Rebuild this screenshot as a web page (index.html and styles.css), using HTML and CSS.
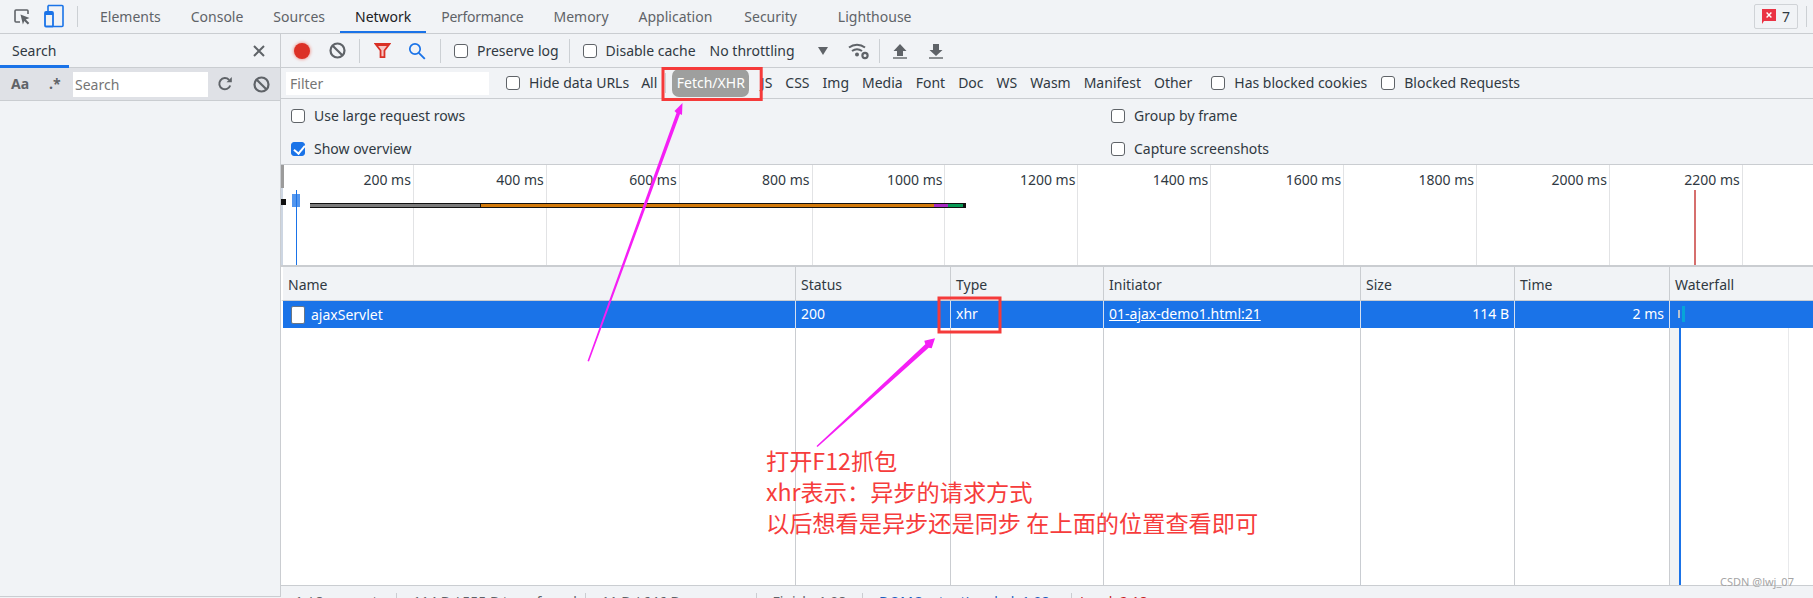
FILE: index.html
```html
<!DOCTYPE html>
<html lang="en">
<head>
<meta charset="utf-8">
<title>Network</title>
<link rel="stylesheet" href="styles.css">
</head>
<body>
<div class="devtools">
  <header class="tabbar">
    <svg class="ico-inspect" width="18" height="18" viewBox="0 0 18 18"><path d="M7 14H3a1 1 0 0 1-1-1V3a1 1 0 0 1 1-1h11a1 1 0 0 1 1 1v3" fill="none" stroke="#5f6368" stroke-width="1.6"/><path d="M7.5 6.5l9 3.4-3.7 1.5 3.5 3.6-1.5 1.5-3.5-3.6-1.4 3.7z" fill="#5f6368"/></svg>
    <svg class="ico-device" width="20" height="24" viewBox="0 0 20 24"><path d="M4 1.5h14a1 1 0 0 1 1 1v19a1 1 0 0 1-1 1H8" fill="none" stroke="#1a73e8" stroke-width="1.6"/><path d="M4 1.5v7" stroke="#1a73e8" stroke-width="1.6"/><rect x="1" y="8" width="8" height="14.5" rx="1" fill="#f1f3f4" stroke="#1a73e8" stroke-width="1.8"/><rect x="1" y="8" width="8" height="3" fill="#1a73e8"/></svg>
    <span class="vsep tall"></span>
    <nav class="tabs">
      <span class="tab">Elements</span>
      <span class="tab">Console</span>
      <span class="tab">Sources</span>
      <span class="tab active">Network</span>
      <span class="tab perf">Performance</span>
      <span class="tab">Memory</span>
      <span class="tab">Application</span>
      <span class="tab sec">Security</span>
      <span class="tab wide">Lighthouse</span>
    </nav>
    <span class="issues">
      <svg width="14" height="15" viewBox="0 0 14 15"><path d="M0 0h14v12H2l-2 3z" fill="#ea3344"/><path d="M4.6 3.6l4.8 4.8M9.4 3.6L4.6 8.4" stroke="#fff" stroke-width="1.4"/></svg>
      <span>7</span>
    </span>
    <span class="vsep end"></span>
  </header>

  <div class="split">
    <aside class="sidebar">
      <div class="side-head">
        <span class="side-tab">Search</span>
        <svg class="ico-close" width="14" height="14" viewBox="0 0 14 14"><path d="M2 2l10 10M12 2L2 12" stroke="#5f6368" stroke-width="2"/></svg>
      </div>
      <div class="side-tools">
        <span class="aa">Aa</span>
        <span class="regex">.*</span>
        <span class="search-box">Search</span>
        <svg class="ico-refresh" width="16" height="16" viewBox="0 0 16 16"><path d="M13.2 9.5A5.6 5.6 0 1 1 12 3.9" fill="none" stroke="#5f6368" stroke-width="2"/><path d="M9.5 6.2h5.3V1z" fill="#5f6368"/></svg>
        <svg class="ico-clear" width="17" height="17" viewBox="0 0 17 17"><circle cx="8.5" cy="8.5" r="7" fill="none" stroke="#5f6368" stroke-width="2.2"/><path d="M3.7 3.7l9.6 9.6" stroke="#5f6368" stroke-width="2.2"/></svg>
      </div>
    </aside>

    <main class="network">
      <div class="toolbar">
        <span class="record"></span>
        <svg class="ico-stop" width="17" height="17" viewBox="0 0 17 17"><circle cx="8.5" cy="8.5" r="7" fill="none" stroke="#5f6368" stroke-width="2.2"/><path d="M3.7 3.7l9.6 9.6" stroke="#5f6368" stroke-width="2.2"/></svg>
        <span class="vsep s1"></span>
        <svg class="ico-funnel" width="17" height="17" viewBox="0 0 19 19"><path d="M1.5 2h16L11.7 9.5v7.5H7.3V9.5z" fill="#f6c6c3" stroke="#d93025" stroke-width="2"/><path d="M1.5 2h16l-2 2.500h-12z" fill="#d93025"/></svg>
        <svg class="ico-find" width="18" height="18" viewBox="0 0 18 18"><circle cx="7" cy="7" r="5.2" fill="none" stroke="#1a73e8" stroke-width="1.7"/><path d="M10.8 10.8l6 6" stroke="#1a73e8" stroke-width="1.9"/></svg>
        <span class="vsep s2"></span>
        <label class="check preserve"><input type="checkbox" class="cb">Preserve log</label>
        <span class="vsep s3"></span>
        <label class="check disable"><input type="checkbox" class="cb">Disable cache</label>
        <span class="throttle">No throttling</span>
        <span class="caret"></span>
        <svg class="ico-wifi" width="22" height="18" viewBox="0 0 22 18"><path d="M1 5.5a13 13 0 0 1 16 0M4 9a8.5 8.5 0 0 1 10 0" fill="none" stroke="#5f6368" stroke-width="2"/><circle cx="9" cy="12.5" r="2" fill="#5f6368"/><circle cx="17" cy="13.5" r="2.6" fill="none" stroke="#5f6368" stroke-width="2.2"/></svg>
        <span class="vsep s4"></span>
        <svg class="ico-up" width="14" height="16" viewBox="0 0 14 16"><path d="M7 1l6.500 7H10v5H4V8H.5z" fill="#5f6368"/><path d="M0 15h14" stroke="#5f6368" stroke-width="1.4"/></svg>
        <svg class="ico-down" width="14" height="16" viewBox="0 0 14 16"><path d="M4 1h6v6h3.500L7 13 .5 7H4z" fill="#5f6368"/><path d="M0 15h14" stroke="#5f6368" stroke-width="1.4"/></svg>
      </div>

      <div class="filterbar">
        <span class="filter-box">Filter</span>
        <label class="check hide"><input type="checkbox" class="cb">Hide data URLs</label>
        <span class="ftype all">All</span>
        <span class="vsep s5"></span>
        <span class="pill">Fetch/XHR</span>
        <span class="ftype">JS</span>
        <span class="ftype">CSS</span>
        <span class="ftype">Img</span>
        <span class="ftype">Media</span>
        <span class="ftype">Font</span>
        <span class="ftype">Doc</span>
        <span class="ftype">WS</span>
        <span class="ftype">Wasm</span>
        <span class="ftype">Manifest</span>
        <span class="ftype">Other</span>
        <label class="check blocked"><input type="checkbox" class="cb">Has blocked cookies</label>
        <label class="check"><input type="checkbox" class="cb">Blocked Requests</label>
      </div>

      <div class="options">
        <label class="check"><input type="checkbox" class="cb">Use large request rows</label>
        <label class="check"><input type="checkbox" class="cb">Group by frame</label>
        <label class="check"><input type="checkbox" class="cb" checked>Show overview</label>
        <label class="check"><input type="checkbox" class="cb">Capture screenshots</label>
      </div>

      <section class="overview">
        <span class="tick">200 ms</span>
        <span class="tick">400 ms</span>
        <span class="tick">600 ms</span>
        <span class="tick">800 ms</span>
        <span class="tick">1000 ms</span>
        <span class="tick">1200 ms</span>
        <span class="tick">1400 ms</span>
        <span class="tick">1600 ms</span>
        <span class="tick">1800 ms</span>
        <span class="tick">2000 ms</span>
        <span class="tick">2200 ms</span>
        <span class="handle"></span>
        <span class="handle-low"></span>
        <span class="mini-dot"></span>
        <span class="mini-box"></span>
        <span class="dcl-line"></span>
        <span class="load-line"></span>
        <div class="timeline">
          <span class="seg gray"></span>
          <span class="seg orange"></span>
          <span class="seg purple"></span>
          <span class="seg green"></span>
        </div>
      </section>

      <div class="cols head">
        <span class="cell">Name</span>
        <span class="cell">Status</span>
        <span class="cell">Type</span>
        <span class="cell">Initiator</span>
        <span class="cell">Size</span>
        <span class="cell">Time</span>
        <span class="cell">Waterfall</span>
      </div>
      <div class="cols row">
        <span class="cell name"><span class="doc"></span>ajaxServlet</span>
        <span class="cell">200</span>
        <span class="cell">xhr</span>
        <span class="cell"><u>01-ajax-demo1.html:21</u></span>
        <span class="cell num">114 B</span>
        <span class="cell num">2 ms</span>
        <span class="cell fall"><span class="fall-a"></span><span class="fall-b"></span></span>
      </div>
      <div class="cols rest">
        <span class="cell"></span>
        <span class="cell"></span>
        <span class="cell"></span>
        <span class="cell"></span>
        <span class="cell"></span>
        <span class="cell"></span>
        <span class="cell fall-body"></span>
      </div>

      <footer class="statusbar">
        <span class="stat s-a">1 / 8 requests</span>
        <span class="stat s-b">114 B / 555 B transferred</span>
        <span class="stat s-c">11 B / 646 B resources</span>
        <span class="stat s-d">Finish: 1.08 s</span>
        <span class="stat s-e dcl">DOMContentLoaded: 1.08 s</span>
        <span class="stat load">Load: 2.18 s</span>
      </footer>
    </main>
  </div>
</div>

<svg class="marks" width="1813" height="598" viewBox="0 0 1813 598">
  <rect x="663" y="68.500" width="98.200" height="31" fill="none" stroke="#f53a3a" stroke-width="3"/>
  <rect x="939" y="298" width="61" height="34" fill="none" stroke="#f53a3a" stroke-width="3"/>
  <path d="M587.500 361L676.500 113l-2-2 8-8-.5 12-2-1L589 361.500z" fill="#f51ff5"/>
  <path d="M816.500 446L925.300 344.200l-1-3.500L935 338.300l-3.300 10-3-.5L817.500 447z" fill="#f51ff5"/>
</svg>
<p class="note">打开F12抓包<br>xhr表示：异步的请求方式<br>以后想看是异步还是同步 在上面的位置查看即可</p>
<span class="watermark">CSDN @lwj_07</span>
</body>
</html>
```
FILE: styles.css
```css
* { box-sizing: border-box; }
html, body { margin: 0; height: 598px; overflow: hidden; background: #fff; }
body { font: 14px/18px "Noto Sans", "Noto Sans CJK SC", sans-serif; color: #303942; position: relative; }

.devtools { width: 1813px; height: 598px; display: flex; flex-direction: column; background: #f1f3f6; }

.vsep { display: block; width: 1px; background: #ccd0d4; flex: none; }

/* top tab bar */
.tabbar { height: 34px; flex: none; display: flex; align-items: center; border-bottom: 1px solid #cacdd1; padding-left: 12px; }
.ico-inspect { margin-left: 1px; flex: none; }
.ico-device { margin-left: 13px; flex: none; margin-top: -1px; }
.vsep.tall { height: 21px; margin-left: 13px; }
.tabs { display: flex; height: 33px; margin-left: 7px; }
.tab { padding: 0 15px; line-height: 33px; color: #5f6368; white-space: nowrap; }
.tab.active { color: #202124; border-bottom: 2.500px solid #1a73e8; }
.tab.perf { letter-spacing: -0.300px; }
.tab.sec { margin-left: 2px; }
.tab.wide { margin-left: 11px; }
.issues { margin-left: auto; width: 44px; height: 25px; border: 1px solid #d0d3d7; border-radius: 2px; display: flex; align-items: center; justify-content: center; gap: 6px; color: #303942; }
.vsep.end { height: 21px; margin: 0 6px 0 8px; }

.split { flex: 1; display: flex; min-height: 0; }

/* sidebar */
.sidebar { width: 281px; flex: none; border-right: 1.500px solid #cacdd1; border-bottom: 1px solid #cacdd1; height: 563px; margin-bottom: 1px; }
.side-head { height: 34px; display: flex; align-items: center; justify-content: space-between; padding-right: 14px; border-bottom: 1px solid #cacdd1; }
.side-tab { width: 69px; height: 34px; line-height: 34px; padding-left: 12px; border-bottom: 3px solid #1a73e8; color: #303942; }
.side-tools { height: 33px; display: flex; align-items: center; background: #dfe1e6; border-bottom: 1px solid #cacdd1; }
.aa { margin-left: 11px; width: 38px; font-weight: 700; color: #5f6368; font-size: 14px; }
.regex { width: 24px; font-weight: 700; color: #5f6368; }
.search-box { width: 135px; height: 25px; background: #fff; padding-left: 2px; line-height: 25px; color: #757575; }
.ico-refresh { margin-left: 9px; flex: none; }
.ico-clear { margin-left: 20px; flex: none; }

/* network */
.network { flex: 1; min-width: 0; display: flex; flex-direction: column; }
.toolbar { height: 34px; flex: none; display: flex; align-items: center; border-bottom: 1px solid #cacdd1; }
.record { width: 16px; height: 16px; border-radius: 50%; background: #dc3126; box-shadow: 0 0 3px 1px #f0a8a2; margin-left: 13px; flex: none; }
.ico-stop { margin-left: 19px; flex: none; }
.toolbar .vsep { height: 24px; }
.vsep.s1 { margin-left: 13px; }
.ico-funnel { margin-left: 14px; flex: none; }
.ico-find { margin-left: 17px; flex: none; }
.vsep.s2 { margin-left: 14px; }
.check { display: inline-flex; align-items: center; gap: 9px; white-space: nowrap; color: #303942; }
.check.preserve { margin-left: 13px; }
.vsep.s3 { margin-left: 10px; }
.check.disable { margin-left: 13px; }
.throttle { margin-left: 14px; }
.caret { margin-left: 23px; border: 5px solid transparent; border-top: 8px solid #5f6368; border-bottom: 0; }
.ico-wifi { margin-left: 20px; flex: none; }
.vsep.s4 { margin-left: 9px; }
.ico-up { margin-left: 13px; flex: none; }
.ico-down { margin-left: 22px; flex: none; }

.cb { appearance: none; -webkit-appearance: none; width: 14px; height: 14px; margin: 0; border: 1px solid #5f6368; border-radius: 3px; background: #fff; position: relative; flex: none; }
.cb:checked { background: #1a73e8; border-color: #1a73e8; }
.cb:checked::after { content: ""; position: absolute; left: 3.500px; top: 0.500px; width: 5px; height: 9px; border: solid #fff; border-width: 0 2px 2px 0; transform: rotate(40deg); }

.filterbar { height: 31px; flex: none; display: flex; align-items: center; border-bottom: 1px solid #cacdd1; }
.filter-box { margin-left: 5px; width: 203px; height: 23px; line-height: 23px; background: #fff; padding-left: 4px; color: #757575; }
.check.hide { margin-left: 17px; }
.ftype { margin-left: 13px; white-space: nowrap; }
.ftype.all { margin-left: 12px; }
.vsep.s5 { height: 20px; margin-left: 8px; }
.pill { margin-left: 6px; width: 77px; height: 28px; line-height: 28px; text-align: center; border-radius: 7px; background: #9e9f9e; color: #fff; white-space: nowrap; }
.pill + .ftype { margin-left: 11.500px; }
.check.blocked { margin-left: 19px; margin-right: 14px; }

.options { height: 66px; flex: none; display: grid; grid-template-columns: 820px 1fr; grid-auto-rows: 33px; padding-left: 10px; border-bottom: 1px solid #cacdd1; }

/* overview */
.overview { height: 102px; flex: none; display: flex; background: #fff; border-bottom: 2px solid #cacdd1; position: relative; }
.tick { flex: 0 0 132.900px; height: 100px; border-right: 1px solid #e2e3e5; padding: 6px 2px 0 0; text-align: right; white-space: nowrap; }
.handle { position: absolute; left: 0; top: 0; width: 3px; height: 23px; background: #9b9b9b; }
.handle-low { position: absolute; left: 0; top: 23px; width: 2px; height: 77px; background: #cdd6e2; }
.mini-dot { position: absolute; left: 0; top: 34px; width: 5px; height: 6px; background: #111; }
.mini-box { position: absolute; left: 11px; top: 29px; width: 8px; height: 13px; background: #1a73e8; opacity: .75; }
.dcl-line { position: absolute; left: 15px; top: 25px; width: 1px; height: 75px; background: #1a73e8; }
.load-line { position: absolute; left: 1413px; top: 25px; width: 2px; height: 75px; background: #d66f6d; }
.timeline { position: absolute; left: 29px; top: 38px; width: 656px; height: 5px; display: flex; background: #111; padding: 1px 3px 1px 0; }
.seg { height: 3px; display: block; }
.seg.gray { width: 170px; background: #7b7b7b; margin-right: 1px; }
.seg.orange { width: 453px; background: #d27a0c; }
.seg.purple { width: 14px; background: #a72bc2; }
.seg.green { width: 15px; background: #089a55; }

/* table */
.cols { display: grid; grid-template-columns: 512px 155px 153px 257px 154px 155px 1fr; flex: none; border-left: 2px solid #fff; }
.cell { border-left: 1px solid #cacdd1; padding: 0 5px; white-space: nowrap; overflow: hidden; }
.cell:first-child { border-left: 0; padding-left: 5px; }
.head { height: 34px; line-height: 35px; border-bottom: 1px solid #cacdd1; color: #303942; }
.row { height: 27px; line-height: 25px; background: #1a73e8; color: #fff; }
.row .cell { border-left-color: #d4dff0; }
.name { display: flex; align-items: center; gap: 6px; padding-left: 8px !important; }
.doc { width: 14px; height: 18px; background: #fff; border: 1px solid #6b7785; border-radius: 2px; flex: none; }
.num { text-align: right; }
.fall { position: relative; }
.fall-a { position: absolute; left: 8px; top: 9px; width: 2px; height: 8px; background: #b7c1cf; }
.fall-b { position: absolute; left: 12px; top: 5px; width: 3px; height: 16px; background: #06a5d8; }
.rest { flex: 1; min-height: 0; background: #fff; }
.fall-body { position: relative; background: linear-gradient(90deg, #f1f3f4 0 9px, #fff 9px); }
.fall-body::before { content: ""; position: absolute; left: 9px; top: 0; bottom: 0; width: 1.500px; background: #1a73e8; }
.fall-body::after { content: ""; position: absolute; left: 118px; top: 0; bottom: 0; width: 1px; background: #e8e9eb; }

.statusbar { height: 13px; flex: none; display: flex; overflow: hidden; border-top: 1px solid #cacdd1; padding: 7px 0 0 14px; }
.stat { height: 18px; flex: none; border-right: 1px solid #cacdd1; white-space: nowrap; color: #5f6368; padding-left: 16px; }
.stat.s-a { padding-left: 0; width: 102px; }
.stat.s-b { width: 188.500px; }
.stat.s-c { width: 171px; }
.stat.s-d { width: 106.500px; }
.stat.s-e { width: 209px; }
.stat.dcl { color: #1a5fc0; }
.stat.load { color: #c5221f; border-right: 0; padding-left: 8px; }

/* annotations */
.marks { position: absolute; left: 0; top: 0; pointer-events: none; }
.note { position: absolute; left: 766px; top: 445px; margin: 0; font: 23.200px/31px "Noto Sans CJK SC", "Noto Sans", sans-serif; color: #f63c3c; white-space: nowrap; }
.watermark { position: absolute; left: 1720px; top: 573px; font-size: 11px; color: #a5a5a5; white-space: nowrap; }
```
